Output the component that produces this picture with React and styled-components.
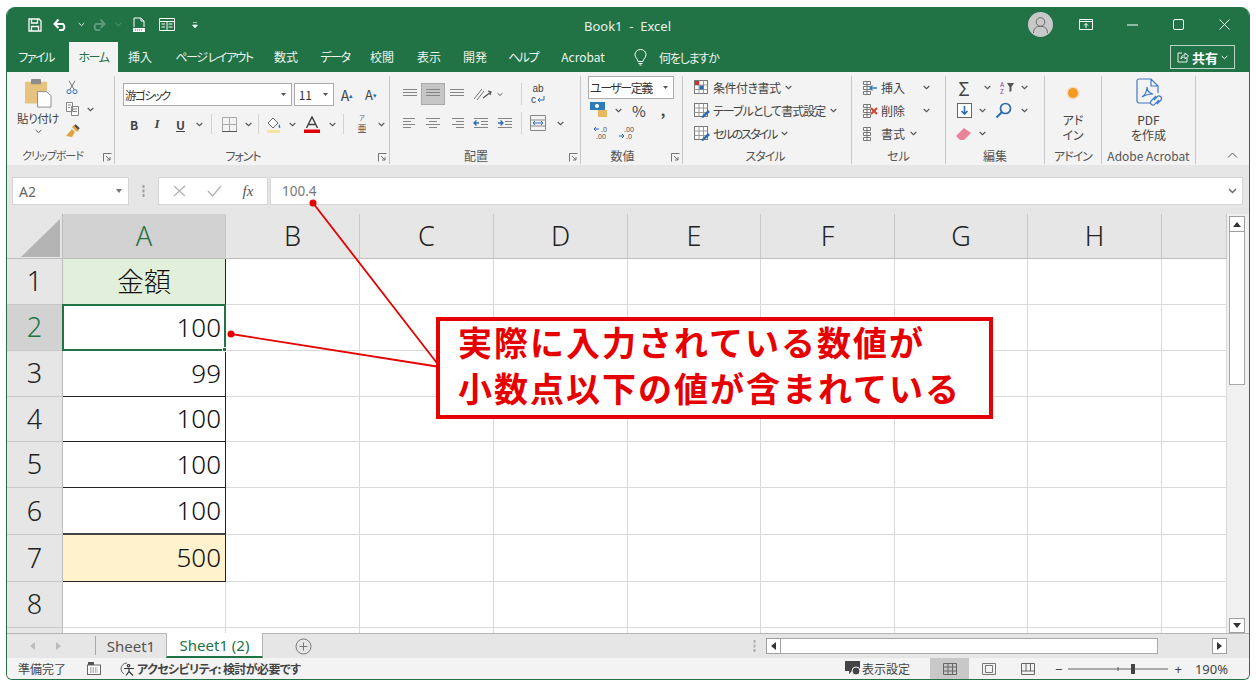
import React from 'react';
import styled, { createGlobalStyle } from 'styled-components';

const GlobalStyle = createGlobalStyle`
    html, body { margin: 0; padding: 0; background: #fff; overflow: hidden; }
    body { font-family: "Noto Sans CJK JP", "Noto Sans", sans-serif; color: #444; font-feature-settings: "palt"; }
    * { box-sizing: border-box; }
`

const GREEN = '#217346';

const Page = styled.div`
    position: relative;
    width: 1256px;
    height: 689px;
    padding: 7px 6px 9px;
`

const Excel = styled.div`
    width: 1244px;
    height: 673px;
    display: flex;
    flex-direction: column;
    overflow: hidden;
    border-radius: 9px 9px 6px 6px;
    border: 1px solid ${GREEN};
    border-top: 0;
    background: #e6e6e6;
`

/* title bar */
const TitleBar = styled.div`
    position: relative;
    height: 35px;
    flex: none;
    display: flex;
    align-items: center;
    padding: 0 2px 0 18px;
    background: ${GREEN};
`

const Quick = styled.div`
    width: ${p => p.$w}px;
    height: 20px;
    flex: none;
    display: flex;
    align-items: center;
    justify-content: center;
`

const BookTitle = styled.div`
    flex: 1;
    padding: 2px 0 0 18px;
    text-align: center;
    font: 13px "Noto Sans", sans-serif;
    white-space: pre;
    color: #e8f0ec;
`

const Avatar = styled.div`
    width: 25px;
    height: 25px;
    margin-right: 10px;
    border-radius: 50%;
    background: #c9c9c9;
    display: flex;
    align-items: center;
    justify-content: center;
`

const WinBtn = styled.div`
    width: 46px;
    display: flex;
    justify-content: center;
`

/* tabs */
const TabBar = styled.div`
    height: 30px;
    flex: none;
    display: flex;
    align-items: flex-end;
    background: ${GREEN};
`

const Tab = styled.div`
    height: 30px;
    width: ${p => p.$w}px;
    flex: none;
    padding-right: ${p => p.$pr || 0}px;
    text-align: center;
    font-size: 12px;
    letter-spacing: ${p => p.$ls || 0}px;
    line-height: 30px;
    white-space: nowrap;
    color: ${p => (p.$active ? GREEN : '#eef4f0')};
    background: ${p => (p.$active ? '#f3f3f3' : 'transparent')};
`

const TellMe = styled.div`
    display: flex;
    align-items: center;
    gap: 12px;
    height: 30px;
    padding-left: 22px;
    font-size: 12px;
    letter-spacing: -1.2px;
    color: #eef4f0;
`

const ShareBtn = styled.div`
    margin: 0 14px 3px auto;
    width: 65px;
    height: 24px;
    display: flex;
    align-items: center;
    justify-content: center;
    gap: 3px;
    border: 1px solid #b9d3c5;
    font-size: 13px;
    font-weight: 700;
    color: #fff;
`

/* ribbon */
const Ribbon = styled.div`
    height: 93px;
    flex: none;
    display: flex;
    background: #f3f3f3;
    font-size: 12px;
    color: #444;
`

const Group = styled.div`
    width: ${p => p.$w}px;
    flex: none;
    display: flex;
    flex-direction: column;
    margin-top: 4px;
    height: 88px;
    border-right: ${p => (p.$last ? 0 : '1px solid #c6c6c6')};
    position: relative;
`

const GroupBody = styled.div`
    height: 71px;
    display: flex;
    flex-direction: ${p => p.$dir || 'column'};
    padding-left: ${p => p.$pl || 0}px;
    padding-top: ${p => p.$pt || 0}px;
`

const GroupLabel = styled.div`
    height: 17px;
    padding-right: ${p => p.$pr || 0}px;
    text-align: center;
    font-size: ${p => p.$fs || 12}px;
    letter-spacing: ${p => p.$ls || 0}px;
    line-height: 17px;
    white-space: nowrap;
    color: #555;
`

const Launcher = styled.svg`
    position: absolute;
    right: 2px;
    bottom: 2px;
    width: 9px;
    height: 9px;
`

const Row = styled.div`
    display: flex;
    align-items: center;
    height: ${p => p.$h || 22}px;
    margin-top: ${p => p.$mt || 0}px;
    margin-left: ${p => p.$ml || 0}px;
`

const Btn = styled.div`
    width: ${p => p.$w}px;
    height: ${p => p.$h || 22}px;
    flex: none;
    display: flex;
    align-items: center;
    justify-content: center;
    font-size: ${p => p.$fs || 12}px;
    font-family: ${p => p.$serif ? '"Liberation Serif", serif' : 'inherit'};
    font-weight: ${p => (p.$bold ? 700 : 400)};
    font-style: ${p => (p.$italic ? 'italic' : 'normal')};
    text-decoration: ${p => (p.$under ? 'underline' : 'none')};
    color: ${p => p.$color || '#444'};
    background: ${p => (p.$on ? '#c6c6c6' : 'transparent')};
    border: ${p => (p.$on ? '1px solid #a9a9a9' : 0)};
    white-space: nowrap;
`

const PhoneticStack = styled.div`
    display: flex;
    flex-direction: column;
    align-items: center;
    font-size: 9px;
    line-height: 13px;
    color: #444;
`

const SmallGlyph = styled.span`
    font-size: 6px;
    line-height: 9px;
    color: #555;
`

const WrapStack = styled.div`
    display: flex;
    flex-direction: column;
    align-items: center;
    font: 10px/11px "Liberation Sans", sans-serif;
    color: #444;
`

const WrapLine = styled.div`
    display: flex;
    align-items: center;
    gap: 1px;
`

const Sep = styled.div`
    width: 1px;
    height: ${p => p.$h || 20}px;
    flex: none;
    margin: 0 ${p => p.$r ?? (p.$m || 4)}px 0 ${p => p.$m || 4}px;
    background: #d2d2d2;
`

const Combo = styled.div`
    width: ${p => p.$w}px;
    height: 23px;
    flex: none;
    display: flex;
    align-items: center;
    justify-content: space-between;
    margin-right: ${p => p.$mr || 0}px;
    padding: 0 5px 0 1px;
    border: 1px solid #ababab;
    background: #fff;
    font-size: ${p => p.$fs || 12}px;
    letter-spacing: ${p => p.$ls || 0}px;
    white-space: nowrap;
    color: #333;
`

const PasteColumn = styled.div`
    width: 54px;
    margin-left: 1px;
    display: flex;
    flex-direction: column;
    align-items: center;
    font-size: 11.5px;
    letter-spacing: -.5px;
    line-height: 15px;
    padding-top: 2px;
    gap: 3px;
`

const ClipTools = styled.div`
    display: flex;
    flex-direction: column;
    gap: 4px;
    padding-top: 4px;
`

const StyleRow = styled.div`
    display: flex;
    align-items: center;
    height: 23px;
    gap: 3px;
    padding-left: ${p => p.$pl || 11}px;
    font-size: 12px;
    letter-spacing: ${p => p.$ls || 0}px;
    white-space: nowrap;
`

const TallBtn = styled.div`
    flex: 1;
    display: flex;
    flex-direction: column;
    align-items: center;
    font-size: 12px;
    line-height: 15px;
    text-align: center;
`

const CollapseSlot = styled.div`
    flex: 1;
    display: flex;
    align-items: flex-end;
    justify-content: flex-end;
    padding: 0 11px 7px 0;
`

/* formula bar */
const FormulaBar = styled.div`
    height: 49px;
    flex: none;
    display: flex;
    align-items: flex-start;
    padding: 12px 6px 0 5px;
    background: #e6e6e6;
`

const NameBox = styled.div`
    width: 117px;
    height: 28px;
    flex: none;
    display: flex;
    align-items: center;
    justify-content: space-between;
    padding: 0 6px;
    background: #fff;
    border: 1px solid #d4d4d4;
    font: 14px "Noto Sans", sans-serif;
    color: #666;
`

const Dots = styled.div`
    width: 29px;
    height: 28px;
    flex: none;
    display: flex;
    align-items: center;
    justify-content: center;
`

const FxBox = styled.div`
    width: 110px;
    height: 28px;
    flex: none;
    margin-right: 2px;
    display: flex;
    align-items: center;
    justify-content: space-around;
    padding: 0 3px;
    background: #fff;
    border: 1px solid #d4d4d4;
    font: italic 15px "Liberation Serif", serif;
    color: #555;
`

const FormulaInput = styled.div`
    flex: 1;
    height: 28px;
    display: flex;
    align-items: center;
    justify-content: space-between;
    padding: 0 5px 0 11px;
    background: #fff;
    border: 1px solid #d4d4d4;
    font: 13.5px "Noto Sans", sans-serif;
    color: #777;
`

/* sheet */
const SheetArea = styled.div`
    height: 419px;
    flex: none;
    display: flex;
    background: #fff;
`

const Grid = styled.div`
    width: 1220px;
    flex: none;
    overflow: hidden;
    display: flex;
    flex-direction: column;
`

const GridRow = styled.div`
    height: ${p => p.$h}px;
    flex: none;
    display: flex;
`

const Corner = styled.div`
    width: 56px;
    flex: none;
    background: #e6e6e6;
    border-right: 1px solid #bdbdbd;
    border-bottom: 1px solid #bdbdbd;
    display: flex;
    align-items: flex-end;
    justify-content: flex-end;
    padding: 0 2px 1px 0;
`

const ColHead = styled.div`
    width: ${p => p.$w}px;
    flex: none;
    display: flex;
    align-items: center;
    justify-content: center;
    padding-bottom: 1px;
    font: 300 27px "Noto Sans", sans-serif;
    color: ${p => (p.$on ? GREEN : '#222')};
    background: ${p => (p.$on ? '#d2d2d2' : '#e6e6e6')};
    border-right: 1px solid #c8c8c8;
    border-bottom: 1px solid #bdbdbd;
`

const RowHead = styled.div`
    width: 56px;
    flex: none;
    display: flex;
    align-items: center;
    justify-content: center;
    padding-bottom: 2px;
    font: 300 27px "Noto Sans", sans-serif;
    color: ${p => (p.$on ? GREEN : '#222')};
    background: ${p => (p.$on ? '#d2d2d2' : '#e6e6e6')};
    border-right: 1px solid #bdbdbd;
    border-bottom: 1px solid #c8c8c8;
`

const Cell = styled.div`
    position: relative;
    width: ${p => p.$w}px;
    flex: none;
    display: flex;
    align-items: center;
    justify-content: flex-end;
    padding-right: 4px;
    font: 300 26px "Noto Sans", sans-serif;
    color: #111;
    border-right: 1px solid #d9d9d9;
    border-bottom: 1px solid #d9d9d9;
`

const AmountCell = styled(Cell)`
    padding-bottom: 2px;
    padding-right: ${p => (p.$center ? 0 : 4)}px;
    justify-content: ${p => (p.$center ? 'center' : 'flex-end')};
    font-family: ${p => (p.$center ? '"Noto Sans CJK JP", sans-serif' : '"Noto Sans", sans-serif')};
    font-size: ${p => (p.$center ? 27 : 26)}px;
    font-feature-settings: normal;
    background: ${p => p.$bg || '#fff'};
    border-right: 1px solid #222;
    border-bottom: ${p => (p.$double ? '2px solid #444' : '1px solid #222')};
    ${p => p.$selected && `
        border: 2px solid ${GREEN};
        margin-left: -1px;
        width: ${p.$w + 1}px;
        margin-top: -1px;
        height: calc(100% + 1px);
        padding-right: 3px;
        z-index: 1;
    `}
`

const FillHandle = styled.div`
    position: absolute;
    right: -3px;
    bottom: -3px;
    width: 5px;
    height: 5px;
    background: ${GREEN};
    border: 1px solid #fff;
`

const VScroll = styled.div`
    flex: 1;
    display: flex;
    flex-direction: column;
    padding: 2px 4px 0 2px;
    background: #f0f0f0;
`

const ScrollBtn = styled.div`
    height: ${p => p.$h || 16}px;
    flex: none;
    display: flex;
    align-items: center;
    justify-content: center;
    background: #fff;
    border: 1px solid #9f9f9f;
`

const VTrack = styled.div`
    flex: 1;
    display: flex;
`

const VThumb = styled.div`
    width: 100%;
    height: 153px;
    background: #fff;
    border: 1px solid #a8a8a8;
    border-top: 0;
`

/* sheet tabs */
const SheetBar = styled.div`
    height: 25px;
    flex: none;
    display: flex;
    align-items: stretch;
    background: #e6e6e6;
    border-top: 1px solid #b5b5b5;
`

const NavArrows = styled.div`
    width: 89px;
    flex: none;
    display: flex;
    align-items: center;
    gap: 21px;
    padding-left: 23px;
    border-right: 1px solid #a8a8a8;
    margin: 2px 0 3px;
`

const SheetTab = styled.div`
    width: ${p => p.$w}px;
    flex: none;
    margin-top: -1px;
    display: flex;
    align-items: center;
    justify-content: center;
    font: 15px "Noto Sans", sans-serif;
    color: ${p => (p.$active ? GREEN : '#555')};
    background: ${p => (p.$active ? '#fff' : 'transparent')};
    border-left: ${p => (p.$active ? '1px solid #b5b5b5' : 0)};
    border-right: ${p => (p.$active ? '1px solid #b5b5b5' : 0)};
    border-bottom: ${p => (p.$active ? `2px solid ${GREEN}` : 0)};
`

const AddSheet = styled.div`
    width: 81px;
    flex: none;
    display: flex;
    align-items: center;
    justify-content: center;
`

const HScrollWrap = styled.div`
    flex: 1;
    display: flex;
    align-items: center;
    justify-content: flex-end;
    padding-right: 22px;
`

const HDots = styled.div`
    margin-right: 10px;
    display: flex;
`

const HScrollTrack = styled.div`
    width: 461px;
    height: 16px;
    display: flex;
`

const HBtn = styled.div`
    width: 15px;
    height: 16px;
    flex: none;
    display: flex;
    align-items: center;
    justify-content: center;
    background: #fff;
    border: 1px solid #9f9f9f;
    margin-left: ${p => (p.$end ? 'auto' : 0)};
`

const HThumb = styled.div`
    width: 377px;
    height: 16px;
    background: #fff;
    border: 1px solid #a8a8a8;
    border-left: 0;
`

/* status bar */
const StatusBar = styled.div`
    flex: 1;
    display: flex;
    align-items: center;
    padding-left: 11px;
    background: #f3f3f3;
    font-size: 12px;
    color: #444;
`

const StatusItem = styled.div`
    display: flex;
    align-items: center;
    gap: ${p => p.$gap || 4}px;
    margin-left: ${p => p.$ml || 0}px;
    font-weight: ${p => (p.$bold ? 700 : 400)};
    letter-spacing: ${p => (p.$bold ? -0.6 : 0)}px;
    white-space: nowrap;
`

const ViewSettings = styled(StatusItem)`
    margin-left: auto;
    margin-right: 20px;
`

const ViewBtn = styled.div`
    width: 39px;
    height: 100%;
    flex: none;
    display: flex;
    align-items: center;
    justify-content: center;
    background: ${p => (p.$on ? '#c8c8c8' : 'transparent')};
`

const Zoom = styled.div`
    display: flex;
    align-items: center;
    margin-left: 8px;
    gap: 6px;
    font: 13px "Noto Sans", sans-serif;
`

const Percent = styled.div`
    margin: 0 21px 0 13px;
    font: 13px "Noto Sans", sans-serif;
`

/* callout lying over the sheet */
const Leaders = styled.svg`
    position: absolute;
    left: 0;
    top: 0;
    pointer-events: none;
`

const Callout = styled.div`
    position: absolute;
    left: 436px;
    top: 317px;
    width: 557px;
    height: 102px;
    display: flex;
    flex-direction: column;
    justify-content: center;
    padding: 0 0 7px 18px;
    background: #fff;
    border: 4px solid #e60000;
    font-size: 34px;
    font-weight: 700;
    line-height: 46px;
    letter-spacing: 2px;
    white-space: nowrap;
    font-feature-settings: normal;
    color: #e60000;
`

/* drawings */
const Chevron = ({ c = '#555', w = 12 }) => (
    <Btn $w={w}>
        <svg width="7" height="5" viewBox="0 0 7 5"><path d="M.7 1l2.800 2.700L6.300 1" fill="none" stroke={c} strokeWidth="1.100" /></svg>
    </Btn>
);

const Launch = () => (
    <Launcher viewBox="0 0 9 9">
        <path d="M.5 8.500v-8h8M3 3l4 4M7 4v3H4" fill="none" stroke="#666" strokeWidth=".9" />
    </Launcher>
);

const Lines = ({ widths, arrow }) => (
    <svg width="16" height="12" viewBox="0 0 16 12">
        {widths.map((l, i) => (
            <path key={i} d={`M${l[0]} ${1.500 + i * 3}H${l[1]}`} stroke="#858585" strokeWidth="1" />
        ))}
        {arrow === 'l' && <path d="M1 6h5M3.500 3.500L1 6l2.500 2.500" stroke="#2b6cb0" strokeWidth="1.300" fill="none" />}
        {arrow === 'r' && <path d="M1 6h5M3.500 3.500L6 6 3.500 8.500" stroke="#2b6cb0" strokeWidth="1.300" fill="none" />}
    </svg>
);

const TableIcon = ({ kind }) => (
    <svg width="16" height="16" viewBox="0 0 16 16">
        <rect x=".5" y=".5" width="13" height="13" fill="#fff" stroke="#777" />
        <path d="M.5 5h13M.5 9.500h13M5 .5v13M9.500 .5v13" stroke="#999" />
        {kind === 'cond' && <rect x="1" y="1" width="4" height="4" fill="#c0392b" />}
        {kind === 'cond' && <rect x="5.500" y="5.500" width="4" height="4" fill="#2b6cb0" />}
        {kind !== 'cond' && <path d="M7 14l7-7 2 2-7 6z" fill="#2b6cb0" />}
    </svg>
);

const InsertIcon = ({ kind }) => (
    <svg width="16" height="16" viewBox="0 0 16 16">
        <path d="M1.500 1.500h7v3h-7zM1.500 6.500h7v3h-7zM1.500 11.500h7v3h-7zM5 1.500v13" fill="#fff" stroke="#777" />
        {kind === 'add' && <path d="M15 8H8M10.500 5.500L8 8l2.500 2.500" fill="none" stroke="#2b7cb8" strokeWidth="1.300" />}
        {kind === 'del' && <path d="M9 5l6 6M15 5l-6 6" stroke="#d83b2b" strokeWidth="1.800" />}
    </svg>
);

const App = () => {
    const columns = [
        { name: 'A', w: 163 },
        { name: 'B', w: 134 },
        { name: 'C', w: 134 },
        { name: 'D', w: 134 },
        { name: 'E', w: 133 },
        { name: 'F', w: 134 },
        { name: 'G', w: 133 },
        { name: 'H', w: 134 },
        { name: '', w: 65 },
    ];
    const rows = [
        { n: '1', h: 46, value: '金額', center: true, bg: '#e2efda' },
        { n: '2', h: 46, value: '100', selected: true },
        { n: '3', h: 46, value: '99' },
        { n: '4', h: 45, value: '100' },
        { n: '5', h: 46, value: '100' },
        { n: '6', h: 47, value: '100', double: true },
        { n: '7', h: 47, value: '500', bg: '#fff2cc' },
        { n: '8', h: 46 },
        { n: '', h: 20 },
    ];

    return (
        <Page>
            <GlobalStyle />
            <Excel>
                <TitleBar>
                    <Quick $w={20}>
                        <svg width="14" height="14" viewBox="0 0 14 14"><path d="M1 1h10l2 2v10H1z M3.500 1v4h6V1 M3.500 13V8.500h7V13" fill="none" stroke="#fff" strokeWidth="1.300" /></svg>
                    </Quick>
                    <Quick $w={32}>
                        <svg width="16" height="13" viewBox="0 0 16 13"><path d="M2 6h8a4 4 0 0 1 0 6H6M5.500 1.500L1.500 6l4 4" fill="none" stroke="#fff" strokeWidth="2" /></svg>
                    </Quick>
                    <Quick $w={8}>
                        <svg width="7" height="5" viewBox="0 0 7 5"><path d="M.7 1l2.800 2.700L6.300 1" fill="none" stroke="#dfe9e4" /></svg>
                    </Quick>
                    <Quick $w={26}>
                        <svg width="16" height="13" viewBox="0 0 16 13"><path d="M14 6H6a4 4 0 0 0 0 6h4M10.500 1.500l4 4.500-4 4" fill="none" stroke="#5d9a7c" strokeWidth="2" /></svg>
                    </Quick>
                    <Quick $w={14}>
                        <svg width="7" height="5" viewBox="0 0 7 5"><path d="M.7 1l2.800 2.700L6.300 1" fill="none" stroke="#5d9a7c" /></svg>
                    </Quick>
                    <Quick $w={28}>
                        <svg width="14" height="16" viewBox="0 0 14 16"><path d="M2 10V1h7l3 3v6M9 1v3h3" fill="none" stroke="#fff" /><path d="M1 11h12v4H1z" fill="#fff" /><path d="M3 13h8" stroke={GREEN} strokeDasharray="1 1" /></svg>
                    </Quick>
                    <Quick $w={28}>
                        <svg width="16" height="13" viewBox="0 0 16 13"><path d="M.5.500h15v12H.5zM.5 3.500h15M8 3.500v9M9.500 6h4M9.500 9h4M2.500 6h3.500M2.500 9h3.500" fill="none" stroke="#fff" /></svg>
                    </Quick>
                    <Quick $w={28}>
                        <svg width="6" height="6" viewBox="0 0 6 6"><path d="M1 .5h4M.5 3h5l-2.500 3z" fill="#fff" stroke="#fff" strokeWidth=".6" /></svg>
                    </Quick>
                    <BookTitle>Book1  -  Excel</BookTitle>
                    <Avatar>
                        <svg width="17" height="17" viewBox="0 0 17 17"><circle cx="8.500" cy="6" r="4.300" fill="none" stroke="#6a6a6a" /><path d="M1.500 17c0-5 3-6.700 7-6.700s7 1.700 7 6.700" fill="none" stroke="#6a6a6a" /></svg>
                    </Avatar>
                    <WinBtn>
                        <svg width="14" height="11" viewBox="0 0 14 11"><path d="M.5.500h13v10H.5zM.5 2.500h13M7 9V4.500M5 6.500l2-2 2 2" fill="none" stroke="#fff" /></svg>
                    </WinBtn>
                    <WinBtn>
                        <svg width="11" height="2" viewBox="0 0 11 2"><path d="M0 1h11" stroke="#fff" /></svg>
                    </WinBtn>
                    <WinBtn>
                        <svg width="11" height="11" viewBox="0 0 11 11"><rect x=".5" y=".5" width="10" height="10" rx="1.500" fill="none" stroke="#fff" /></svg>
                    </WinBtn>
                    <WinBtn>
                        <svg width="11" height="11" viewBox="0 0 11 11"><path d="M.5.500l10 10M10.500.500l-10 10" stroke="#fff" /></svg>
                    </WinBtn>
                </TitleBar>

                <TabBar>
                    <Tab $w={62} $pr={4} $ls={-1.500}>ファイル</Tab>
                    <Tab $w={49} $active $ls={-1.500}>ホーム</Tab>
                    <Tab $w={44}>挿入</Tab>
                    <Tab $w={104} $ls={-1.500}>ページ レイアウト</Tab>
                    <Tab $w={40}>数式</Tab>
                    <Tab $w={58} $ls={-1.500}>データ</Tab>
                    <Tab $w={36}>校閲</Tab>
                    <Tab $w={58}>表示</Tab>
                    <Tab $w={34}>開発</Tab>
                    <Tab $w={62} $ls={-1.500}>ヘルプ</Tab>
                    <Tab $w={58}>Acrobat</Tab>
                    <TellMe>
                        <svg width="13" height="17" viewBox="0 0 13 17"><path d="M4 12.500C4 10 1 9 1 5.500a5.500 5 0 0 1 11 0C12 9 9 10 9 12.500zM4.500 14.500h4M5.500 16h2" fill="none" stroke="#fff" /></svg>
                        何をしますか
                    </TellMe>
                    <ShareBtn>
                        <svg width="12" height="12" viewBox="0 0 12 12"><path d="M5 2H1v9h9V7M4 8c0-3 2-4 4-4V2l3.500 3L8 8V6C6 6 5 6.500 4 8z" fill="none" stroke="#fff" strokeWidth=".9" /></svg>
                        共有
                        <svg width="7" height="5" viewBox="0 0 7 5"><path d="M.7 1l2.800 2.700L6.300 1" fill="none" stroke="#fff" /></svg>
                    </ShareBtn>
                </TabBar>

                <Ribbon>
                    <Group $w={108}>
                        <GroupBody $dir="row" $pl={3}>
                            <PasteColumn>
                                <svg width="30" height="30" viewBox="0 0 30 33" preserveAspectRatio="none">
                                    <rect x="2" y="4" width="22" height="24" rx="1" fill="#e8c37f" />
                                    <rect x="8" y="1" width="10" height="6" rx="1" fill="#8c8c8c" />
                                    <path d="M14.500 15h9l4.500 4.500V32h-13.500z" fill="#fff" stroke="#8a8a8a" />
                                </svg>
                                貼り付け
                                <svg width="7" height="5" viewBox="0 0 7 5"><path d="M.7 1l2.800 2.700L6.300 1" fill="none" stroke="#555" /></svg>
                            </PasteColumn>
                            <ClipTools>
                                <svg width="14" height="15" viewBox="0 0 16 20"><path d="M4 1l7 12M12 1L5 13" stroke="#666" strokeWidth="1.200" /><circle cx="4" cy="15.500" r="2.700" fill="none" stroke="#2b6cb0" strokeWidth="1.300" /><circle cx="12" cy="15.500" r="2.700" fill="none" stroke="#2b6cb0" strokeWidth="1.300" /></svg>
                                <Row $h={20}>
                                    <svg width="16" height="16" viewBox="0 0 16 16"><path d="M1.500 1.500h6v9h-6zM6.500 5.500h7v9h-7zM3 4h3M3 6.500h2M8 8h4M8 10.500h4" fill="#fff" stroke="#777" strokeWidth=".9" /></svg>
                                    <Chevron w={18} />
                                </Row>
                                <svg width="16" height="16" viewBox="0 0 16 16"><path d="M9 2l5 5-2 2-5-5zM7 6l3 3-3 5-6-1z" fill="#d9a441" /><path d="M10 2l4 4" stroke="#444" strokeWidth="2" /></svg>
                            </ClipTools>
                        </GroupBody>
                        <GroupLabel $pr={16} $fs={11} $ls={-1}>クリップボード</GroupLabel>
                        <Launch />
                    </Group>

                    <Group $w={275}>
                        <GroupBody $pl={8} $pt={7}>
                            <Row $h={23}>
                                <Combo $w={169} $mr={2} $fs={11.500} $ls={-1.500}>
                                    游ゴシック
                                    <svg width="5" height="3" viewBox="0 0 5 3"><path d="M0 0h5L2.500 3z" fill="#555" /></svg>
                                </Combo>
                                <Combo $w={40} $fs={12}>
                                    &nbsp;11
                                    <svg width="5" height="3" viewBox="0 0 5 3"><path d="M0 0h5L2.500 3z" fill="#555" /></svg>
                                </Combo>
                                <Btn $w={26} $fs={14} $h={23}>A<sup style={{ fontSize: 7, color: '#2b6cb0' }}>▴</sup></Btn>
                                <Btn $w={22} $fs={13} $h={23}>A<sup style={{ fontSize: 7, color: '#2b6cb0' }}>▾</sup></Btn>
                            </Row>
                            <Row $mt={7}>
                                <Btn $w={22} $bold $fs={12}>B</Btn>
                                <Btn $w={24} $italic $bold $serif $fs={13}>I</Btn>
                                <Btn $w={23} $bold $under $fs={12}>U</Btn>
                                <Chevron w={14} />
                                <Sep $m={5} />
                                <Btn $w={24}>
                                    <svg width="15" height="15" viewBox="0 0 15 15"><path d="M.5.500h14v14H.5zM7.500.500v14M.5 7.500h14" fill="none" stroke="#a9a9a9" strokeWidth="1" /><path d="M0 14.500h15" stroke="#555" strokeWidth="1.200" /></svg>
                                </Btn>
                                <Chevron w={14} />
                                <Sep $m={3} />
                                <Btn $w={24}>
                                    <svg width="16" height="17" viewBox="0 0 16 17"><path d="M2 7l5-5 5 5-5 5z" fill="#fff" stroke="#666" /><path d="M13 8c1 2 2 3 1 4-1 0-2-1-1-4z" fill="#2b6cb0" /><rect x="1" y="14" width="13" height="3" fill="#f5e3a0" /></svg>
                                </Btn>
                                <Chevron w={12} />
                                <Btn $w={28}>
                                    <svg width="16" height="17" viewBox="0 0 16 17"><path d="M2.500 12L8 1l5.500 11M4.500 8.500h7" fill="none" stroke="#444" strokeWidth="1.500" /><rect y="13.500" width="16" height="3.500" fill="#e00000" /></svg>
                                </Btn>
                                <Chevron w={12} />
                                <Sep $m={5} />
                                <Btn $w={26}>
                                    <PhoneticStack>
                                        <SmallGlyph>ア</SmallGlyph>
                                        亜
                                    </PhoneticStack>
                                </Btn>
                                <Chevron w={12} />
                            </Row>
                        </GroupBody>
                        <GroupLabel $pr={18} $ls={-1}>フォント</GroupLabel>
                        <Launch />
                    </Group>

                    <Group $w={191}>
                        <GroupBody $pl={9} $pt={7}>
                            <Row>
                                <Btn $w={22}><Lines widths={[[1, 15], [1, 15], [1, 15]]} /></Btn>
                                <Btn $w={24} $on><Lines widths={[[1, 15], [1, 15], [1, 15]]} /></Btn>
                                <Btn $w={24}><Lines widths={[[1, 15], [1, 15], [1, 15]]} /></Btn>
                                <Btn $w={28}>
                                    <svg width="20" height="14" viewBox="0 0 20 14"><path d="M1 12L9 2M4 13l7-9" stroke="#777" fill="none" /><path d="M10 11l8-6M15 4l3 1-1 3" stroke="#555" fill="none" strokeWidth="1.200" /></svg>
                                </Btn>
                                <Chevron w={6} />
                                <Sep $m={18} $r={4} $h={22} />
                                <Btn $w={24}>
                                    <WrapStack>
                                        <span>ab</span>
                                        <WrapLine>
                                            <span>c</span>
                                            <svg width="8" height="7" viewBox="0 0 8 7"><path d="M7 0v4H1M3 2L1 4l2 2" fill="none" stroke="#2b6cb0" /></svg>
                                        </WrapLine>
                                    </WrapStack>
                                </Btn>
                            </Row>
                            <Row $mt={7}>
                                <Btn $w={22}><Lines widths={[[1, 13], [1, 9], [1, 13], [1, 9]]} /></Btn>
                                <Btn $w={24}><Lines widths={[[1, 15], [4, 12], [1, 15], [4, 12]]} /></Btn>
                                <Btn $w={24}><Lines widths={[[3, 15], [7, 15], [3, 15], [7, 15]]} /></Btn>
                                <Btn $w={24}><Lines widths={[[1, 15], [8, 15], [8, 15], [1, 15]]} arrow="l" /></Btn>
                                <Btn $w={24}><Lines widths={[[1, 15], [8, 15], [8, 15], [1, 15]]} arrow="r" /></Btn>
                                <Sep $m={4} $h={22} />
                                <Btn $w={24}>
                                    <svg width="16" height="16" viewBox="0 0 16 16"><path d="M.5.500h15v15H.5zM.5 5h15M.5 11h15" fill="none" stroke="#888" /><path d="M3 8h10M5 6l-2 2 2 2M11 6l2 2-2 2" fill="none" stroke="#2b6cb0" /></svg>
                                </Btn>
                                <Chevron w={20} />
                            </Row>
                        </GroupBody>
                        <GroupLabel $pr={18}>配置</GroupLabel>
                        <Launch />
                    </Group>

                    <Group $w={102}>
                        <GroupBody $pl={7}>
                            <Combo $w={86} $fs={12} $ls={-1.500}>
                                ユーザー定義
                                <svg width="5" height="3" viewBox="0 0 5 3"><path d="M0 0h5L2.500 3z" fill="#555" /></svg>
                            </Combo>
                            <Row>
                                <Btn $w={22}>
                                    <svg width="18" height="16" viewBox="0 0 18 16"><rect width="15" height="8" fill="#2b7cb8" /><circle cx="7" cy="4" r="2" fill="#fff" /><rect x="8" y="8" width="9" height="7" fill="#e8b85f" /></svg>
                                </Btn>
                                <Chevron w={16} />
                                <Btn $w={26} $fs={15}>%</Btn>
                                <Btn $w={22} $bold $fs={14}>,</Btn>
                            </Row>
                            <Row>
                                <Btn $w={28}>
                                    <svg width="18" height="15" viewBox="0 0 18 15"><path d="M1 4h5M3 2L1 4l2 2" fill="none" stroke="#2b6cb0" /><text x="8" y="7" fontSize="7" fontFamily="Noto Sans" fill="#555">.0</text><text x="3" y="14" fontSize="7" fontFamily="Noto Sans" fill="#555">.00</text></svg>
                                </Btn>
                                <Btn $w={22}>
                                    <svg width="18" height="15" viewBox="0 0 18 15"><text x="6" y="7" fontSize="7" fontFamily="Noto Sans" fill="#555">.00</text><path d="M1 11h5M4 9l2 2-2 2" fill="none" stroke="#2b6cb0" /><text x="8" y="14" fontSize="7" fontFamily="Noto Sans" fill="#555">.0</text></svg>
                                </Btn>
                            </Row>
                        </GroupBody>
                        <GroupLabel $pr={18}>数値</GroupLabel>
                        <Launch />
                    </Group>

                    <Group $w={169}>
                        <GroupBody>
                            <StyleRow $ls={-.5}><TableIcon kind="cond" />条件付き書式<Chevron w={10} /></StyleRow>
                            <StyleRow $ls={-1}><TableIcon />テーブルとして書式設定<Chevron w={10} /></StyleRow>
                            <StyleRow $ls={-2}><TableIcon />セルのスタイル<Chevron w={10} /></StyleRow>
                        </GroupBody>
                        <GroupLabel $pr={4} $ls={-1}>スタイル</GroupLabel>
                    </Group>

                    <Group $w={94}>
                        <GroupBody>
                            <StyleRow $pl={10}><InsertIcon kind="add" />挿入<Chevron w={36} /></StyleRow>
                            <StyleRow $pl={10}><InsertIcon kind="del" />削除<Chevron w={36} /></StyleRow>
                            <StyleRow $pl={10}><InsertIcon />書式<Chevron w={10} /></StyleRow>
                        </GroupBody>
                        <GroupLabel>セル</GroupLabel>
                    </Group>

                    <Group $w={99}>
                        <GroupBody $pl={6}>
                            <Row $h={23}>
                                <Btn $w={24} $fs={19}>Σ</Btn>
                                <Chevron w={22} />
                                <Btn $w={20}>
                                    <svg width="16" height="14" viewBox="0 0 16 14"><text x="0" y="6" fontSize="6.500" fontFamily="Noto Sans" fill="#7a4fa3">A</text><text x="0" y="13" fontSize="6.500" fontFamily="Noto Sans" fill="#7a4fa3">Z</text><path d="M7 2h7l-2.500 4v4l-2 1V6z" fill="#555" /></svg>
                                </Btn>
                                <Chevron w={12} />
                            </Row>
                            <Row $h={23}>
                                <Btn $w={24}>
                                    <svg width="15" height="15" viewBox="0 0 15 15"><rect x=".5" y=".5" width="14" height="14" fill="#fff" stroke="#666" /><path d="M7.500 3v8M4.500 8l3 3 3-3" fill="none" stroke="#2b6cb0" strokeWidth="1.600" /></svg>
                                </Btn>
                                <Chevron w={12} />
                                <Btn $w={30}>
                                    <svg width="17" height="17" viewBox="0 0 17 17"><circle cx="10.500" cy="6.500" r="5" fill="none" stroke="#2b6cb0" strokeWidth="1.700" /><path d="M7 10l-5.500 5.500" stroke="#2b6cb0" strokeWidth="2" /></svg>
                                </Btn>
                                <Chevron w={12} />
                            </Row>
                            <Row $h={23}>
                                <Btn $w={24}>
                                    <svg width="18" height="14" viewBox="0 0 18 14"><path d="M1 9l8-8 7 5-7 7H5z" fill="#e8839a" /></svg>
                                </Btn>
                                <Chevron w={12} />
                            </Row>
                        </GroupBody>
                        <GroupLabel>編集</GroupLabel>
                    </Group>

                    <Group $w={57}>
                        <TallBtn>
                            <svg width="24" height="36" viewBox="0 0 24 36"><circle cx="12" cy="17" r="5" fill="#f59a23" /><circle cx="12" cy="17" r="6.500" fill="#f59a23" opacity=".25" /></svg>
                            <div>アド<br />イン</div>
                        </TallBtn>
                        <GroupLabel $ls={-1}>アドイン</GroupLabel>
                    </Group>

                    <Group $w={94}>
                        <TallBtn>
                            <svg width="32" height="36" viewBox="0 0 32 36"><path d="M17 27H6a2 2 0 0 1-2-2V5a2 2 0 0 1 2-2h12l7 7v7M18 3v7h7M9 21c3-2 5-6 5-10 0 3 2 6 6 7-4 0-8 1-11 3z" fill="none" stroke="#3f78c9" strokeWidth="1.200" /><path d="M23 20l-5 5a2.500 2.500 0 0 0 4 3l4-4M24 28l4-4a2.500 2.500 0 0 0-4-3l-3 3" fill="none" stroke="#3f78c9" strokeWidth="1.200" /></svg>
                            <div>PDF<br />を作成</div>
                        </TallBtn>
                        <GroupLabel>Adobe Acrobat</GroupLabel>
                    </Group>

                    <CollapseSlot>
                        <svg width="11" height="6" viewBox="0 0 11 6"><path d="M1 5.500l4.500-4.500L10 5.500" fill="none" stroke="#555" /></svg>
                    </CollapseSlot>
                </Ribbon>

                <FormulaBar>
                    <NameBox>
                        A2
                        <svg width="6" height="4" viewBox="0 0 6 4"><path d="M0 0h6L3 4z" fill="#777" /></svg>
                    </NameBox>
                    <Dots>
                        <svg width="3" height="12" viewBox="0 0 3 12"><path d="M1.500 0v3M1.500 4.500v3M1.500 9v3" stroke="#a0a0a0" strokeWidth="2" /></svg>
                    </Dots>
                    <FxBox>
                        <svg width="13" height="12" viewBox="0 0 13 12"><path d="M1 1l11 10M12 1L1 11" stroke="#b5b5b5" strokeWidth="1.400" /></svg>
                        <svg width="15" height="12" viewBox="0 0 15 12"><path d="M1 6l4.500 5L14 1" fill="none" stroke="#b5b5b5" strokeWidth="1.400" /></svg>
                        fx
                    </FxBox>
                    <FormulaInput>
                        100.4
                        <svg width="9" height="6" viewBox="0 0 9 6"><path d="M1 1l3.500 3.500L8 1" fill="none" stroke="#666" strokeWidth="1.400" /></svg>
                    </FormulaInput>
                </FormulaBar>

                <SheetArea>
                    <Grid>
                        <GridRow $h={45}>
                            <Corner>
                                <svg width="39" height="38" viewBox="0 0 39 38"><path d="M39 0v38H0z" fill="#b4b4b4" /></svg>
                            </Corner>
                            {columns.map((col, i) => (
                                <ColHead key={i} $w={col.w} $on={col.name === 'A'}>{col.name}</ColHead>
                            ))}
                        </GridRow>
                        {rows.map(row => (
                            <GridRow key={row.n} $h={row.h}>
                                <RowHead $on={row.n === '2'}>{row.n}</RowHead>
                                {columns.map((col, i) => {
                                    if (i === 0 && row.value) {
                                        return (
                                            <AmountCell key={i} $w={col.w} $center={row.center} $bg={row.bg} $selected={row.selected} $double={row.double}>
                                                {row.value}
                                                {row.selected && <FillHandle />}
                                            </AmountCell>
                                        );
                                    }
                                    return <Cell key={i} $w={col.w} />;
                                })}
                            </GridRow>
                        ))}
                    </Grid>
                    <VScroll>
                        <ScrollBtn>
                            <svg width="8" height="5" viewBox="0 0 8 5"><path d="M4 0l4 5H0z" fill="#333" /></svg>
                        </ScrollBtn>
                        <VTrack><VThumb /></VTrack>
                        <ScrollBtn $h={15}>
                            <svg width="8" height="5" viewBox="0 0 8 5"><path d="M4 5L0 0h8z" fill="#333" /></svg>
                        </ScrollBtn>
                    </VScroll>
                </SheetArea>

                <SheetBar>
                    <NavArrows>
                        <svg width="5" height="8" viewBox="0 0 5 8"><path d="M5 0v8L0 4z" fill="#bcbcbc" /></svg>
                        <svg width="5" height="8" viewBox="0 0 5 8"><path d="M0 0v8l5-4z" fill="#bcbcbc" /></svg>
                    </NavArrows>
                    <SheetTab $w={70}>Sheet1</SheetTab>
                    <SheetTab $w={97} $active>Sheet1 (2)</SheetTab>
                    <AddSheet>
                        <svg width="17" height="17" viewBox="0 0 17 17"><circle cx="8.500" cy="8.500" r="7.500" fill="none" stroke="#777" /><path d="M8.500 4.500v8M4.500 8.500h8" stroke="#777" /></svg>
                    </AddSheet>
                    <HScrollWrap>
                        <HDots>
                            <svg width="3" height="12" viewBox="0 0 3 12"><path d="M1.500 0v3M1.500 4.500v3M1.500 9v3" stroke="#b0b0b0" strokeWidth="2" /></svg>
                        </HDots>
                        <HScrollTrack>
                            <HBtn>
                                <svg width="5" height="8" viewBox="0 0 5 8"><path d="M5 0v8L0 4z" fill="#333" /></svg>
                            </HBtn>
                            <HThumb />
                            <HBtn $end>
                                <svg width="5" height="8" viewBox="0 0 5 8"><path d="M0 0v8l5-4z" fill="#333" /></svg>
                            </HBtn>
                        </HScrollTrack>
                    </HScrollWrap>
                </SheetBar>

                <StatusBar>
                    <StatusItem>準備完了</StatusItem>
                    <StatusItem $ml={21}>
                        <svg width="14" height="13" viewBox="0 0 14 13"><rect x=".5" y="3" width="13" height="9.500" fill="#fff" stroke="#666" /><rect x="1" y="0" width="6" height="3" fill="#555" /><path d="M3 6h8M3 8h8M3 10h8" stroke="#777" strokeDasharray="1.500 1" /></svg>
                    </StatusItem>
                    <StatusItem $ml={17} $gap={2} $bold>
                        <svg width="17" height="14" viewBox="0 0 17 14"><path d="M9 1a6 6 0 0 0-6 6 6 6 0 0 0 3 5" fill="none" stroke="#666" /><path d="M10.500 2.500a1.200 1.200 0 1 0 .1 0zM6 6.500h10M11 6.500v3l-3 4M11 9.500l4 4" fill="none" stroke="#333" strokeWidth="1.200" /></svg>
                        アクセシビリティ: 検討が必要です
                    </StatusItem>
                    <ViewSettings $gap={1}>
                        <svg width="16" height="15" viewBox="0 0 16 15"><path d="M0 0h15v10H7l-3 3v-3H0z" fill="#444" /><circle cx="11" cy="10" r="4" fill="#444" stroke="#f3f3f3" /></svg>
                        表示設定
                    </ViewSettings>
                    <ViewBtn $on>
                        <svg width="14" height="12" viewBox="0 0 14 12"><path d="M.5.500h13v11H.5zM.5 4h13M.5 8h13M5 .500v11M9.500 .500v11" fill="none" stroke="#666" /></svg>
                    </ViewBtn>
                    <ViewBtn>
                        <svg width="14" height="12" viewBox="0 0 14 12"><path d="M.5.500h13v11H.5zM3.500 2.500h7v7h-7z" fill="none" stroke="#777" /></svg>
                    </ViewBtn>
                    <ViewBtn>
                        <svg width="14" height="12" viewBox="0 0 14 12"><path d="M.5.500h13v11H.5zM.5 8h13M5 .500V8M9.500 .500V8" fill="none" stroke="#666" /></svg>
                    </ViewBtn>
                    <Zoom>
                        −
                        <svg width="100" height="12" viewBox="0 0 100 12"><path d="M0 6h100" stroke="#666" /><path d="M50 4v4" stroke="#555" /><rect x="63" y="1" width="4" height="10" fill="#444" /></svg>
                        +
                    </Zoom>
                    <Percent>190%</Percent>
                </StatusBar>
            </Excel>

            <Leaders width="1256" height="689" viewBox="0 0 1256 689">
                <path d="M313 203L440 367M231 334L440 367" fill="none" stroke="#e60000" strokeWidth="1.800" />
                <circle cx="313" cy="203" r="3.500" fill="#e60000" />
                <circle cx="231" cy="334" r="3.500" fill="#e60000" />
            </Leaders>
            <Callout>
                <div>実際に入力されている数値が</div>
                <div>小数点以下の値が含まれている</div>
            </Callout>
        </Page>
    );
};

export default App;
